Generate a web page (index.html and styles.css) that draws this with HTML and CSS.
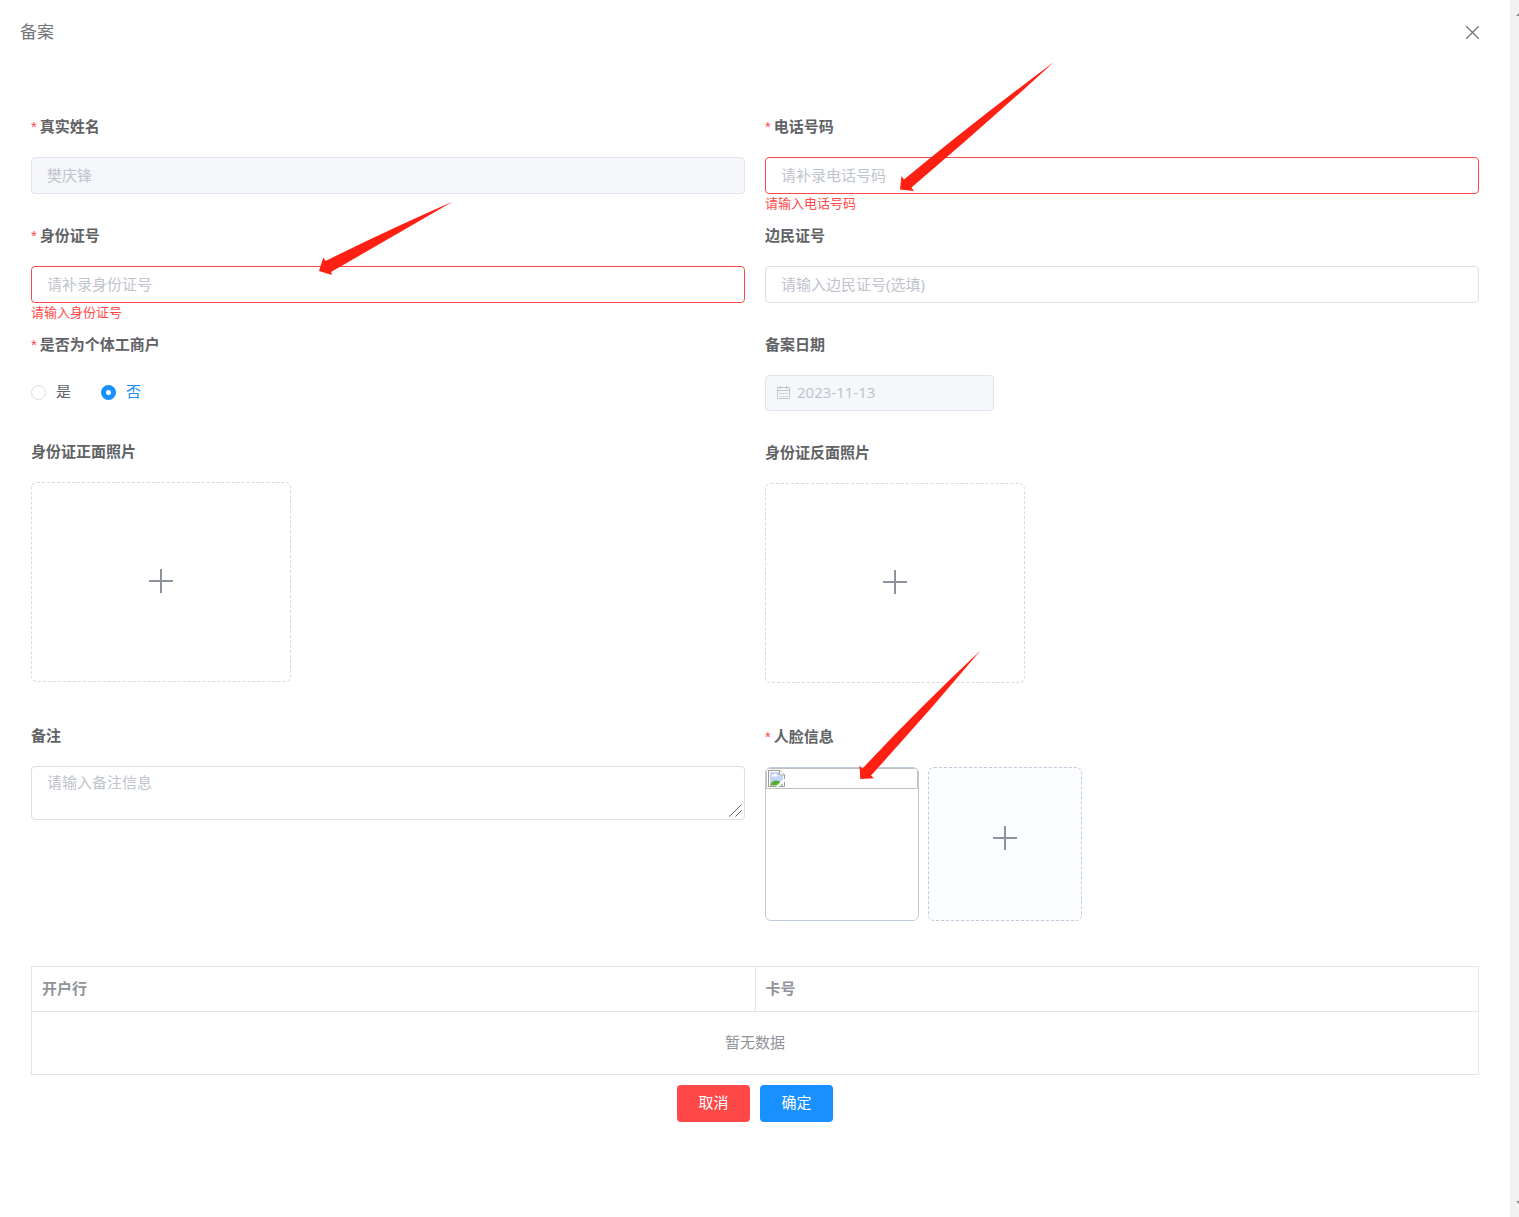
FILE: index.html
```html
<!DOCTYPE html>
<html lang="zh-CN">
<head>
<meta charset="utf-8">
<meta name="viewport" content="width=device-width, initial-scale=1">
<title>备案</title>
<link rel="stylesheet" href="styles.css">
</head>
<body>
<div class="page">
  <main class="dialog">
    <header class="dialog-header">
      <h1 class="dialog-title">备案</h1>
      <button class="close" type="button" aria-label="关闭">
        <svg width="15" height="15" viewBox="0 0 15 15" fill="none" stroke="currentColor" stroke-width="1.3"><path d="M1.2 1.2 13.8 13.8M13.8 1.2 1.2 13.8"/></svg>
      </button>
    </header>

    <form class="form">
      <div class="columns">
        <div class="column">
          <div class="field">
            <label class="label required" for="name">真实姓名</label>
            <input class="input" id="name" type="text" placeholder="樊庆锋" disabled>
          </div>
          <div class="field">
            <label class="label required" for="idno">身份证号</label>
            <input class="input invalid" id="idno" type="text" placeholder="请补录身份证号">
            <p class="error">请输入身份证号</p>
            <svg class="arrow arrow-idno" width="136" height="76" viewBox="318 200 136 76"><path d="M319 271 323.300 257.500 325.500 261 Q390 229 453 201.500 Q390 238 331 272L332 275Z"/></svg>
          </div>
          <fieldset class="field">
            <legend class="label required">是否为个体工商户</legend>
            <div class="radios">
              <label class="radio"><input type="radio" name="business"><span>是</span></label>
              <label class="radio"><input type="radio" name="business" checked><span>否</span></label>
            </div>
          </fieldset>
          <div class="field upload-field">
            <span class="label">身份证正面照片</span>
            <button class="upload" type="button" aria-label="上传身份证正面照片">
              <svg class="plus" width="24" height="24" viewBox="0 0 24 24"><path d="M0 12h24M12 0v24"/></svg>
            </button>
          </div>
          <div class="field">
            <label class="label" for="remark">备注</label>
            <textarea class="input textarea" id="remark" placeholder="请输入备注信息"></textarea>
            <svg class="grip" width="13" height="13" viewBox="0 0 13 13"><path d="M.5 12.500l12-12M6.500 12.500l6-6"/></svg>
          </div>
        </div>

        <div class="column">
          <div class="field">
            <label class="label required" for="phone">电话号码</label>
            <input class="input invalid" id="phone" type="text" placeholder="请补录电话号码">
            <p class="error">请输入电话号码</p>
            <svg class="arrow arrow-phone" width="156" height="132" viewBox="899 61 156 132"><path d="M900 189.500 901.500 176 904 179.500 Q980 117 1054 62 Q984 126 911.500 187.500L914 191Z"/></svg>
          </div>
          <div class="field">
            <label class="label" for="border">边民证号</label>
            <input class="input" id="border" type="text" placeholder="请输入边民证号(选填)">
          </div>
          <div class="field">
            <label class="label" for="date">备案日期</label>
            <div class="date">
              <svg width="15" height="15" viewBox="0 0 15 15" fill="none" stroke="currentColor"><path d="M1.500 2.500h12v11h-12zM1.500 5.500h12M4.500 1v3M10.500 1v3"/><path d="M3.500 8.500h8M3.500 11.500h8" stroke-dasharray="2 1"/></svg>
              <input class="date-input" id="date" type="text" value="2023-11-13" disabled>
            </div>
          </div>
          <div class="field upload-field">
            <span class="label">身份证反面照片</span>
            <button class="upload" type="button" aria-label="上传身份证反面照片">
              <svg class="plus" width="24" height="24" viewBox="0 0 24 24"><path d="M0 12h24M12 0v24"/></svg>
            </button>
          </div>
          <div class="field">
            <span class="label required">人脸信息</span>
            <div class="faces">
              <div class="face">
                <div class="broken">
                  <svg width="17" height="17" viewBox="0 0 17 17"><path d="M.5.500H12L16.500 5v11.500H.5z" fill="#fff"/><path d="M2 2h9v4h4v9H2z" fill="#c3d5f4"/><path d="M3.500 6.500c0-1.500 1-2 2-1.500.5-2 3-1.500 3 0 1.500 0 1.500 1.500.5 1.500z" fill="#fff"/><path d="M2 15.500c1-3.500 3.500-5.500 7-5 3 .5 5 2.500 6 5z" fill="#55ad35"/><path d="M.5 16.500V.5H12L16.500 5v11.500z" fill="none" stroke="#9a9a9a"/><path d="M11.500.5V5h5" fill="#fff" stroke="#9a9a9a"/><path d="M17 9.500 9 17" fill="none" stroke="#fff" stroke-width="2.500"/></svg>
                </div>
              </div>
              <button class="face face-add" type="button" aria-label="上传人脸照片">
                <svg class="plus" width="24" height="24" viewBox="0 0 24 24"><path d="M0 12h24M12 0v24"/></svg>
              </button>
            </div>
            <svg class="arrow arrow-face" width="123" height="131" viewBox="859 649 123 131"><path d="M860.300 779 859.500 765.500 862.500 768.500 Q920 707 980.500 650.500 Q928 713 871 775.500L874 778.300Z"/></svg>
          </div>
        </div>
      </div>

      <table class="table">
        <thead><tr><th>开户行</th><th>卡号</th></tr></thead>
        <tbody><tr><td colspan="2">暂无数据</td></tr></tbody>
      </table>

      <div class="actions">
        <button class="button danger" type="button">取消</button>
        <button class="button primary" type="button">确定</button>
      </div>
    </form>
  </main>
  <div class="rail" aria-hidden="true">
    <svg width="9" height="5" viewBox="0 0 9 5"><path d="M6 5 11 0 16 5z"/></svg>
    <svg width="9" height="5" viewBox="0 0 9 5"><path d="M6 0 11 5 16 0z"/></svg>
  </div>
</div>
</body>
</html>
```
FILE: styles.css
```css
* {
  box-sizing: border-box;
}

body {
  margin: 0;
  background: #fff;
  color: #606266;
  font: 15px/22px "Noto Sans", "Noto Sans CJK SC", sans-serif;
}

button,
input,
textarea {
  font: inherit;
}

.page {
  display: flex;
  min-height: 100vh;
}

.dialog {
  flex: 1;
  min-width: 0;
}

.dialog-header {
  display: flex;
  align-items: center;
  justify-content: space-between;
  height: 65px;
  padding: 0 30px 0 20px;
}

.dialog-title {
  margin: 0;
  padding-bottom: 2px;
  color: #72767b;
  font-size: 17px;
  font-weight: 400;
}

.close {
  display: flex;
  padding: 0;
  border: 0;
  background: none;
  color: #72767b;
}

.form {
  padding: 42px 31px 95px;
}

.columns {
  display: grid;
  grid-template-columns: 1fr 1fr;
  column-gap: 20px;
  margin-bottom: 45px;
}

.column {
  display: flex;
  flex-direction: column;
  gap: 22px;
}

.field {
  position: relative;
  min-width: 0;
  margin: 0;
  padding: 0;
  border: 0;
}

.upload-field {
  margin-bottom: 12px;
}

.label {
  display: block;
  height: 38px;
  margin-bottom: 12px;
  padding: 0;
  font-weight: 700;
  line-height: 38px;
}

.required::before {
  content: "*";
  margin-right: 3px;
  color: #ff4949;
  font-family: "Liberation Sans", sans-serif;
  font-weight: 400;
}

.input {
  display: block;
  width: 100%;
  height: 37px;
  padding: 0 15px 2px;
  border: 1px solid #dcdfe6;
  border-radius: 4px;
  background: #fff;
  color: #606266;
}

.input::placeholder {
  color: #c0c4cc;
  opacity: 1;
}

.input:disabled {
  border-color: #dfe4ed;
  background: #f5f7fa;
}

.input.invalid {
  border-color: #ff4949;
}

.textarea {
  height: 54px;
  padding: 4px 15px;
  resize: none;
}

.grip {
  position: absolute;
  right: 3px;
  bottom: 3px;
  fill: none;
  stroke: #606266;
  pointer-events: none;
}

.error {
  position: absolute;
  top: 86px;
  left: 0;
  margin: 0;
  color: #ff4949;
  font-size: 13px;
  line-height: 20px;
}

.radios {
  display: flex;
  gap: 30px;
  height: 35px;
}

.radio {
  display: flex;
  align-items: center;
  gap: 10px;
}

.radio span {
  padding-bottom: 3px;
}

.radio input {
  appearance: none;
  width: 15px;
  height: 15px;
  margin: 0;
  border: 1px solid #dcdfe6;
  border-radius: 50%;
  background: #fff;
}

.radio input:checked {
  border: 5px solid #1890ff;
}

.radio:has(:checked) {
  color: #1890ff;
}

.date {
  display: flex;
  align-items: center;
  gap: 6px;
  width: 229px;
  height: 36px;
  padding: 0 10px 2px;
  border: 1px solid #dfe4ed;
  border-radius: 4px;
  background: #f5f7fa;
  color: #c0c4cc;
}

.date-input {
  flex: 1;
  min-width: 0;
  padding: 0;
  border: 0;
  background: none;
  color: #c0c4cc;
}

.upload {
  display: flex;
  align-items: center;
  justify-content: center;
  width: 260px;
  height: 200px;
  padding: 0 0 2px;
  border: 1px dashed #d9d9d9;
  border-radius: 6px;
  background: #fff;
}

.plus {
  stroke: #8c939d;
  stroke-width: 2;
}

.faces {
  display: flex;
  gap: 9px;
}

.face {
  width: 154px;
  height: 154px;
  padding: 0;
  overflow: hidden;
  border: 1px solid #c0ccda;
  border-radius: 6px;
}

.face-add {
  display: flex;
  align-items: center;
  justify-content: center;
  padding-bottom: 12px;
  border-style: dashed;
  background: #fbfdff;
}

.broken {
  height: 21px;
  padding: 1px;
  border: 1px solid #c0c0c0;
}

.broken svg {
  display: block;
}

.arrow {
  position: absolute;
  fill: #ff2014;
  pointer-events: none;
  z-index: 1;
}

.arrow-phone {
  top: -46px;
  left: 134px;
}

.arrow-idno {
  top: -16px;
  left: 287px;
}

.arrow-face {
  top: -68px;
  left: 94px;
}

.table {
  width: 100%;
  border: 1px solid #dfe6ec;
  border-collapse: collapse;
  table-layout: fixed;
  color: #909399;
}

.table th {
  height: 45px;
  padding: 0 10px 2px;
  border: 1px solid #dfe6ec;
  text-align: left;
}

.table td {
  height: 63px;
  padding: 0 0 2px;
  text-align: center;
}

.actions {
  display: flex;
  justify-content: center;
  gap: 10px;
  margin-top: 10px;
}

.button {
  width: 73px;
  height: 37px;
  padding: 0 0 3px;
  border: 0;
  border-radius: 4px;
  color: #fff;
}

.danger {
  background: #ff4949;
}

.primary {
  background: #1890ff;
}

.rail {
  display: flex;
  flex-direction: column;
  justify-content: space-between;
  width: 9px;
  padding: 11px 0;
  overflow: hidden;
  background: #f1f1f1;
  fill: #8a8a8a;
}
```
